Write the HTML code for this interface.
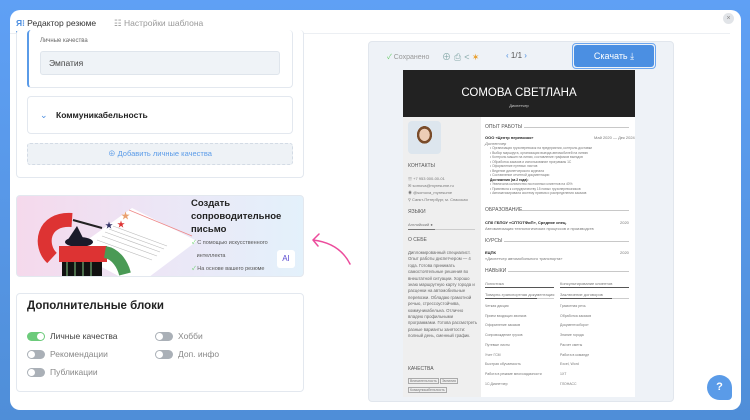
<!DOCTYPE html>
<html><head><meta charset="utf-8"><style>
*{box-sizing:border-box;margin:0;padding:0}
body{width:750px;height:420px;overflow:hidden;background:linear-gradient(180deg,#5fa0f5,#4f8ed8);font-family:"Liberation Sans","Noto Sans CJK SC",sans-serif;position:relative}
.a{position:absolute}
.panel{left:10px;top:10px;width:731px;height:400px;background:#fff;border-radius:10px}
.card{background:#fff;border:1px solid #e3e8ef;border-radius:4px}
.t{font-size:4px;color:#777;white-space:nowrap}
.tg{width:18px;height:9px;border-radius:5px;background:#aab0b7}
.tg:after{content:"";position:absolute;width:7px;height:7px;border-radius:50%;background:#fff;top:1px;left:1px}
.tg.on{background:#6ccb7b}.tg.on:after{left:10px}
.lbl{font-size:8.5px;color:#888}
.hr{height:1px;background:#c8c8c8}
</style></head><body>
<div class="a panel"></div>
<!-- tabs -->
<div class="a" style="left:16px;top:18px;font-size:8.5px;color:#333"><span style="color:#4a8de0;font-weight:bold">Я⁝</span> Редактор резюме</div>
<div class="a" style="left:16px;top:31px;width:86px;height:2px;background:#5a9be8"></div>
<div class="a" style="left:114px;top:18px;font-size:8.5px;color:#999">☷ Настройки шаблона</div>
<div class="a" style="left:10px;top:33px;width:720px;height:1px;background:#eceff3"></div>
<div class="a" style="left:723px;top:13px;width:11px;height:11px;border-radius:50%;background:#e1e4e8;font-size:7px;color:#888;text-align:center;line-height:11px">×</div>
<!-- left top card -->
<div class="a card" style="left:16px;top:30px;width:288px;height:148px;border-top:none"></div>
<div class="a card" style="left:27px;top:30px;width:266px;height:58px;border-top:none;border-left:2px solid #5a9be8;border-right:1px solid #e3e8ef"></div>
<div class="a" style="left:40px;top:38px;font-size:6px;color:#666">Личные качества</div>
<div class="a" style="left:40px;top:51px;width:240px;height:24px;background:#eff3f7;border:1px solid #dfe5ec;border-radius:3px;font-size:8.5px;color:#444;padding:6px 8px">Эмпатия</div>
<div class="a card" style="left:27px;top:96px;width:266px;height:38px"></div>
<div class="a" style="left:40px;top:110px;font-size:9px;color:#4a8de0">⌄</div>
<div class="a" style="left:56px;top:110px;font-size:8.5px;font-weight:bold;color:#222">Коммуникабельность</div>
<div class="a" style="left:27px;top:143px;width:266px;height:22px;background:#eef2f6;border:1px dashed #d3dbe5;border-radius:3px;font-size:7.5px;color:#5a9be8;text-align:center;line-height:20px">⊕ Добавить личные качества</div>
<!-- promo -->
<div class="a" style="left:16px;top:195px;width:288px;height:82px;border-radius:4px;background:linear-gradient(90deg,#f5d9ec,#ece6f6 50%,#e3f1fb);border:1px solid #e3e8ef;overflow:hidden">
 <svg width="180" height="82" style="position:absolute;left:0;top:0">
  <polygon points="55,55 115,12 180,45 120,90" fill="#fff"/>
  <g stroke="#bbb" stroke-width="0.6"><line x1="85" y1="40" x2="140" y2="60"/><line x1="88" y1="36" x2="143" y2="56"/><line x1="92" y1="33" x2="147" y2="53"/><line x1="96" y1="30" x2="150" y2="50"/><line x1="80" y1="44" x2="135" y2="64"/></g>
  <line x1="112" y1="14" x2="175" y2="40" stroke="#e88" stroke-width="0.8"/>
  <line x1="56" y1="24" x2="85" y2="32" stroke="#222" stroke-width="2"/>
  <path d="M55 24 C25 22,22 50,35 62" stroke="#d33" stroke-width="14" fill="none"/>
  <path d="M50 45 L60 30 L68 46 Z" fill="#1a1a2a"/>
  <ellipse cx="62" cy="46" rx="14" ry="5" fill="#1a1a2a"/>
  <rect x="42" y="50" width="48" height="16" fill="#d33"/>
  <rect x="45" y="66" width="40" height="18" fill="#111"/>
  <g stroke="#8c8" stroke-width="1"><line x1="50" y1="66" x2="50" y2="82"/><line x1="58" y1="66" x2="58" y2="82"/><line x1="66" y1="66" x2="66" y2="82"/><line x1="74" y1="66" x2="74" y2="82"/></g>
  <path d="M88 56 C100 58,106 70,108 78" stroke="#4a9a55" stroke-width="12" fill="none"/>
  <text x="88" y="32" font-size="8" fill="#336">★</text><text x="100" y="31" font-size="8" fill="#d33">★</text><text x="104" y="23" font-size="9" fill="#e9a070">★</text>
 </svg>
</div>
<div class="a" style="left:191px;top:197px;font-size:9.5px;font-weight:bold;color:#222;line-height:13px">Создать<br>сопроводительное<br>письмо</div>
<div class="a" style="left:192px;top:237px;font-size:5.5px;color:#555;line-height:13px"><span style="color:#5c5">✓</span> С помощью искусственного<br>&nbsp;&nbsp;&nbsp;интеллекта<br><span style="color:#5c5">✓</span> На основе вашего резюме</div>
<div class="a" style="left:277px;top:250px;width:18px;height:18px;background:#fff;border-radius:3px;font-size:8px;color:#5a4ad0;text-align:center;line-height:18px">AI</div>
<!-- arrow -->
<svg class="a" style="left:305px;top:222px" width="50" height="50"><path d="M45 42 C38 28,25 20,8 18 M8 18 L14 12 M8 18 L13 24" stroke="#ec4c9c" stroke-width="1.5" fill="none" stroke-linecap="round"/></svg>
<!-- extra blocks -->
<div class="a card" style="left:16px;top:293px;width:288px;height:99px"></div>
<div class="a" style="left:27px;top:300px;font-size:11.5px;font-weight:bold;color:#222">Дополнительные блоки</div>
<div class="a tg on" style="left:27px;top:332px"></div><div class="a lbl" style="left:50px;top:331px;color:#444">Личные качества</div>
<div class="a tg" style="left:155px;top:332px"></div><div class="a lbl" style="left:178px;top:331px">Хобби</div>
<div class="a tg" style="left:27px;top:350px"></div><div class="a lbl" style="left:50px;top:349px">Рекомендации</div>
<div class="a tg" style="left:155px;top:350px"></div><div class="a lbl" style="left:178px;top:349px">Доп. инфо</div>
<div class="a tg" style="left:27px;top:368px"></div><div class="a lbl" style="left:50px;top:367px">Публикации</div>
<!-- preview -->
<div class="a" style="left:368px;top:41px;width:306px;height:361px;background:#eef2f7;border-radius:4px;border:1px solid #e1e6ed"></div>
<div class="a" style="left:387px;top:52px;font-size:7px;color:#999"><span style="color:#6c6">✓</span> Сохранено</div>
<div class="a" style="left:442px;top:50px;font-size:9px;color:#8aa;letter-spacing:3px">⊕⎙<span>&lt;</span><span style="color:#e9a030">✶</span></div>
<div class="a" style="left:506px;top:51px;font-size:8px;color:#555"><span style="color:#4a8de0">‹</span> 1/1 <span style="color:#4a8de0">›</span></div>
<div class="a" style="left:572px;top:43px;width:84px;height:26px;border:1px solid #6ca6ef;border-radius:4px;padding:1px"><div style="width:100%;height:100%;background:#4b8fe2;border-radius:3px;color:#fff;font-size:9px;text-align:center;line-height:22px">Скачать ⤓</div></div>
<!-- resume page -->
<div class="a" style="left:403px;top:70px;width:232px;height:327px;background:#fff"></div>
<div class="a" style="left:403px;top:70px;width:232px;height:47px;background:#222;color:#fff;text-align:center">
 <div style="font-size:11.5px;margin-top:17px">СОМОВА СВЕТЛАНА</div><div style="font-size:4px;margin-top:4px;color:#ccc">Диспетчер</div></div>
<div class="a" style="left:403px;top:117px;width:78px;height:280px;background:#efefef"></div>
<div class="a" style="left:408px;top:121px;width:33px;height:33px;border-radius:4px;background:radial-gradient(ellipse at 50% 42%,#edcdb6 0 22%,#7a4c2a 23% 32%,#dde6ee 33%)"></div>
<div class="a t" style="left:408px;top:163px;font-size:5px;color:#555">КОНТАКТЫ</div>
<div class="a t" style="left:408px;top:175px;line-height:7px">☏ +7 953 000-00-01<br>✉ somova@myresume.ru<br>◉ @somova_myresume<br>⚲ Санкт-Петербург, м. Спасская</div>
<div class="a t" style="left:408px;top:209px;font-size:5px;color:#555">ЯЗЫКИ</div>
<div class="a t" style="left:408px;top:222px">Английский ●</div>
<div class="a" style="left:408px;top:229px;width:67px;height:1px;background:#ccc"></div><div class="a" style="left:408px;top:229px;width:27px;height:1px;background:#777"></div>
<div class="a t" style="left:408px;top:237px;font-size:5px;color:#555">О СЕБЕ</div>
<div class="a" style="left:408px;top:250px;width:70px;font-size:4.3px;color:#666;line-height:6.4px">Дипломированный специалист. Опыт работы диспетчером — 4 года. Готова принимать самостоятельные решения во внештатной ситуации. Хорошо знаю маршрутную карту города и расценки на автомобильные перевозки. Обладаю грамотной речью, стрессоустойчива, коммуникабельна. Отлично владею профильными программами. Готова рассмотреть разные варианты занятости: полный день, сменный график.</div>
<div class="a t" style="left:408px;top:366px;font-size:5px;color:#555">КАЧЕСТВА</div>
<div class="a t" style="left:408px;top:377px;font-size:3.5px;line-height:9px"><span style="border:1px solid #aaa;padding:0 1px">Внимательность</span> <span style="border:1px solid #aaa;padding:0 1px">Эмпатия</span><br><span style="border:1px solid #aaa;padding:0 1px">Коммуникабельность</span></div>
<!-- right col -->
<div class="a t" style="left:485px;top:124px;font-size:5px;color:#555">ОПЫТ РАБОТЫ</div><div class="a hr" style="left:524px;top:127px;width:105px"></div>
<div class="a t" style="left:485px;top:135px;color:#222;font-weight:bold">ООО «Центр перевозок»</div><div class="a t" style="left:594px;top:135px">Май 2020 — Дек 2024</div>
<div class="a t" style="left:485px;top:141px;font-style:italic">Диспетчер</div>
<div class="a" style="left:490px;top:146px;font-size:3.3px;color:#777;line-height:4.5px;white-space:nowrap">• Организация грузоперевозок на предприятии, контроль доставки<br>• Выбор маршрута, организация выезда автомобилей на линию<br>• Контроль машин на линии, составление графиков выездов<br>• Обработка заказов и использование программы 1С<br>• Оформление путевых листов<br>• Ведение диспетчерского журнала<br>• Составление отчетной документации<br><b style="color:#222">Достижения (за 2 года):</b><br>• Увеличила количество постоянных клиентов на 40%<br>• Привлекла к сотрудничеству 15 новых грузоперевозчиков<br>• Автоматизировала систему приема и распределения заказов</div>
<div class="a t" style="left:485px;top:207px;font-size:5px;color:#555">ОБРАЗОВАНИЕ</div><div class="a hr" style="left:522px;top:210px;width:107px"></div>
<div class="a t" style="left:485px;top:220px;color:#222;font-weight:bold">СПб ГБПОУ «СПТОТФиП», Средняе спец.</div><div class="a t" style="left:620px;top:220px">2020</div>
<div class="a t" style="left:485px;top:226px">Автоматизация технологических процессов и производств</div>
<div class="a t" style="left:485px;top:238px;font-size:5px;color:#555">КУРСЫ</div><div class="a hr" style="left:504px;top:241px;width:125px"></div>
<div class="a t" style="left:485px;top:250px;color:#222;font-weight:bold">ЕЦПК</div><div class="a t" style="left:620px;top:250px">2020</div>
<div class="a t" style="left:485px;top:256px">«Диспетчер автомобильного транспорта»</div>
<div class="a t" style="left:485px;top:268px;font-size:5px;color:#555">НАВЫКИ</div><div class="a hr" style="left:508px;top:271px;width:121px"></div>
<div class="a t" style="left:485px;top:281px">Логистика</div><div class="a t" style="left:560px;top:281px">Консультирование клиентов</div>
<div class="a" style="left:485px;top:287px;width:69px;height:1px;background:#555"></div><div class="a" style="left:560px;top:287px;width:69px;height:1px;background:#555"></div>
<div class="a t" style="left:485px;top:292px">Товарно-транспортная документация</div><div class="a t" style="left:560px;top:292px">Заключение договоров</div>
<div class="a" style="left:485px;top:298px;width:69px;height:1px;background:#ccc"></div><div class="a" style="left:485px;top:298px;width:52px;height:1px;background:#555"></div>
<div class="a" style="left:560px;top:298px;width:69px;height:1px;background:#ccc"></div><div class="a" style="left:560px;top:298px;width:52px;height:1px;background:#555"></div>
<div class="a" style="left:485px;top:302px;font-size:3.5px;color:#777;line-height:9.7px;white-space:nowrap">Четкая дикция<br>Прием входящих звонков<br>Оформление заказов<br>Сопровождение грузов<br>Путевые листы<br>Учет ГСМ<br>Быстрая обучаемость<br>Работа в режиме многозадачности<br>1С:Диспетчер</div>
<div class="a" style="left:560px;top:302px;font-size:3.5px;color:#777;line-height:9.7px;white-space:nowrap">Грамотная речь<br>Обработка заказов<br>Документооборот<br>Знание города<br>Расчет сметы<br>Работа в команде<br>Excel, Word<br>1XT<br>ГЛОНАСС</div>
<!-- help -->
<div class="a" style="left:707px;top:375px;width:25px;height:25px;border-radius:50% 50% 4px 50%;background:#5a9be8;color:#fff;font-weight:bold;font-size:11px;text-align:center;line-height:25px">?</div>
</body></html>
